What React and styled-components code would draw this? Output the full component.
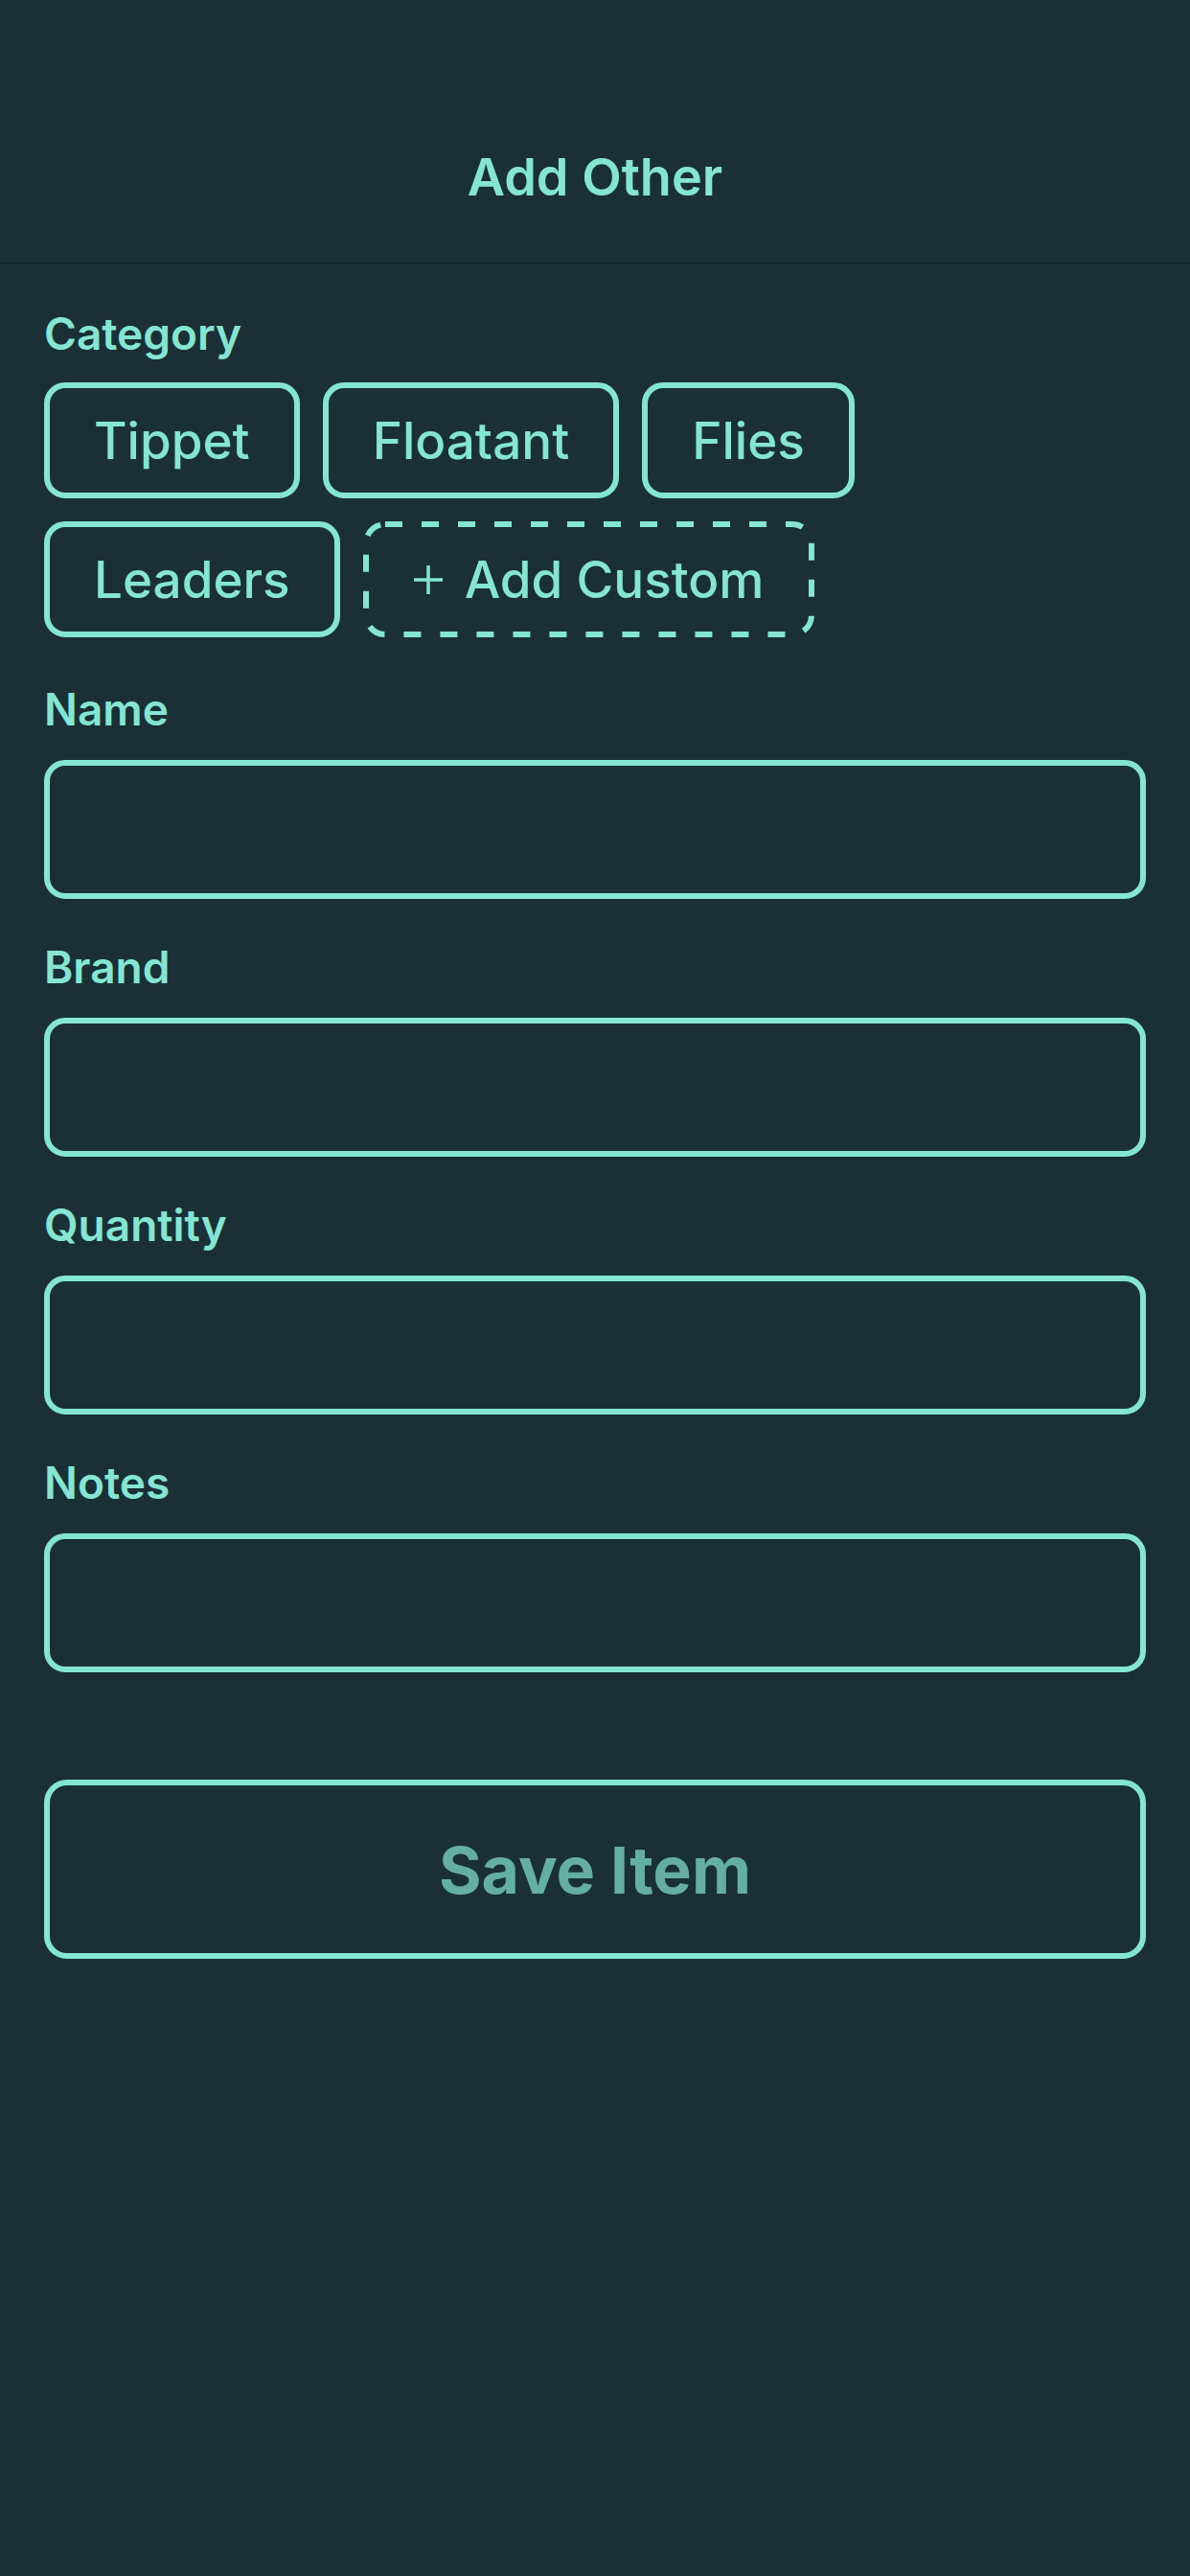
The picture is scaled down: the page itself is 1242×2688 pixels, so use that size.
import React from "react";
import styled, { createGlobalStyle } from "styled-components";

const ACCENT = "#84e6d2";
const BG = "#1a3036";

const Global = createGlobalStyle`
  html, body {
    margin: 0;
    padding: 0;
    background: ${BG};
  }
  body {
    font-family: Inter, "Noto Sans", "Liberation Sans", sans-serif;
    -webkit-font-smoothing: antialiased;
  }
  * { box-sizing: border-box; }
`;

const Page = styled.div`
  min-height: 2688px;
  background: ${BG};
  color: ${ACCENT};
`;

const Header = styled.header`
  padding: 152px 0 56px;
  border-bottom: 2px solid #13272c;
  text-align: center;
`;

const Title = styled.h1`
  margin: 0;
  font-size: 54px;
  line-height: 66px;
  font-weight: 600;
  color: ${ACCENT};
`;

const Form = styled.div`
  padding: 45px 46px;
  display: flex;
  flex-direction: column;
`;

const Label = styled.div`
  font-size: 46px;
  line-height: 54px;
  font-weight: 600;
  color: ${ACCENT};
`;

const ChipWrap = styled.div`
  display: flex;
  flex-wrap: wrap;
  gap: 24px;
  margin-top: 24px;
  margin-bottom: 48px;
`;

const Chip = styled.button`
  position: relative;
  height: 121px;
  padding: 0 46px;
  border: 6px solid ${(p) => (p.$dashed ? "transparent" : ACCENT)};
  border-radius: 22px;
  background: transparent;
  color: ${ACCENT};
  font-family: inherit;
  font-size: 53px;
  font-weight: 500;
  display: inline-flex;
  align-items: center;
  gap: 22px;
  cursor: pointer;
`;

const DashedOutline = styled.svg`
  position: absolute;
  left: -6px;
  top: -6px;
  overflow: visible;
  pointer-events: none;
`;

const Field = styled.div`
  display: flex;
  flex-direction: column;
  gap: 26px;
  & + & {
    margin-top: 44px;
  }
`;

const Input = styled.input`
  height: 145px;
  width: 100%;
  border: 6px solid ${ACCENT};
  border-radius: 22px;
  background: transparent;
  color: ${ACCENT};
  font-family: inherit;
  font-size: 48px;
  padding: 0 36px;
  outline: none;
`;

const SaveButton = styled.button`
  margin-top: 112px;
  height: 187px;
  width: 100%;
  border: 6px solid ${ACCENT};
  border-radius: 24px;
  background: transparent;
  display: flex;
  align-items: center;
  justify-content: center;
  font-family: inherit;
  font-size: 68px;
  font-weight: 700;
  color: rgba(132, 230, 210, 0.7);
`;

function PlusIcon() {
  return (
    <svg width="32" height="32" viewBox="0 0 32 32" aria-hidden="true">
      <path d="M16 1v30M1 16h30" stroke={ACCENT} strokeWidth="3.5" />
    </svg>
  );
}

function AddCustomChip() {
  const ref = React.useRef(null);
  const [size, setSize] = React.useState({ w: 480, h: 121 });
  React.useLayoutEffect(() => {
    if (ref.current) {
      setSize({ w: ref.current.offsetWidth, h: ref.current.offsetHeight });
    }
  }, []);
  return (
    <Chip $dashed ref={ref}>
      <DashedOutline
        width={size.w}
        height={size.h}
        viewBox={`0 0 ${size.w} ${size.h}`}
        aria-hidden="true"
      >
        <rect
          x="3"
          y="3"
          width={size.w - 6}
          height={size.h - 6}
          rx="20"
          fill="none"
          stroke={ACCENT}
          strokeWidth="6"
          strokeDasharray="18 20"
        />
      </DashedOutline>
      <PlusIcon />
      Add Custom
    </Chip>
  );
}

const categories = ["Tippet", "Floatant", "Flies", "Leaders"];
const fields = ["Name", "Brand", "Quantity", "Notes"];

export default function App() {
  return (
    <Page>
      <Global />
      <Header>
        <Title>Add Other</Title>
      </Header>
      <Form>
        <Label>Category</Label>
        <ChipWrap>
          {categories.map((c) => (
            <Chip key={c}>{c}</Chip>
          ))}
          <AddCustomChip />
        </ChipWrap>
        {fields.map((f) => (
          <Field key={f}>
            <Label>{f}</Label>
            <Input aria-label={f} />
          </Field>
        ))}
        <SaveButton>Save Item</SaveButton>
      </Form>
    </Page>
  );
}
